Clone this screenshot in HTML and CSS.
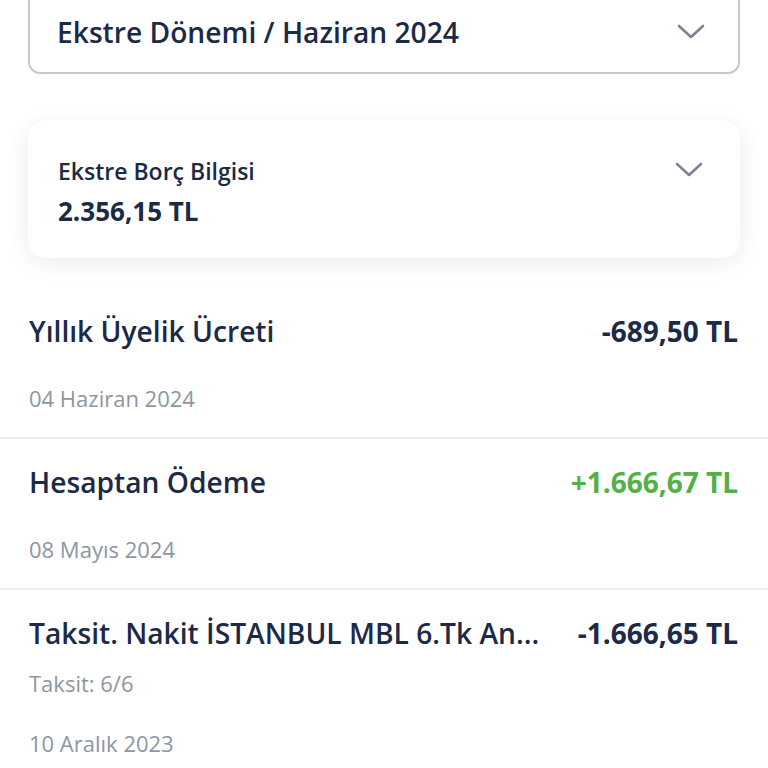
FILE: index.html
```html
<!DOCTYPE html>
<html lang="tr">
<head>
<meta charset="utf-8">
<title>Ekstre</title>
<link rel="stylesheet" href="styles.css">
</head>
<body>
<div class="page">
  <div class="period-select">
    <span class="period-text">Ekstre Dönemi / Haziran 2024</span>
    <svg class="chevron" width="28" height="16" viewBox="0 0 28 16"><path d="M2 2 L14 13 L26 2" fill="none" stroke="#7b8494" stroke-width="2.6" stroke-linecap="round" stroke-linejoin="round"/></svg>
  </div>

  <div class="debt-card">
    <div class="debt-info">
      <div class="debt-label">Ekstre Borç Bilgisi</div>
      <div class="debt-amount">2.356,15 TL</div>
    </div>
    <svg class="chevron card-chevron" width="28" height="16" viewBox="0 0 28 16"><path d="M2 2 L14 13 L26 2" fill="none" stroke="#7b8494" stroke-width="2.6" stroke-linecap="round" stroke-linejoin="round"/></svg>
  </div>

  <ul class="tx-list">
    <li class="tx">
      <div class="tx-head">
        <span class="tx-title">Yıllık Üyelik Ücreti</span>
        <span class="tx-amount">-689,50 TL</span>
      </div>
      <div class="tx-meta">04 Haziran 2024</div>
    </li>
    <li class="tx">
      <div class="tx-head">
        <span class="tx-title">Hesaptan Ödeme</span>
        <span class="tx-amount positive">+1.666,67 TL</span>
      </div>
      <div class="tx-meta">08 Mayıs 2024</div>
    </li>
    <li class="tx">
      <div class="tx-head">
        <span class="tx-title">Taksit. Nakit İSTANBUL MBL 6.Tk An...</span>
        <span class="tx-amount">-1.666,65 TL</span>
      </div>
      <div class="tx-meta installment">Taksit: 6/6</div>
      <div class="tx-meta after-installment">10 Aralık 2023</div>
    </li>
  </ul>
</div>
</body>
</html>
```

FILE: styles.css
```css
html, body {
  margin: 0;
  padding: 0;
  background: #ffffff;
}
body {
  font-family: "Open Sans", "Noto Sans", sans-serif;
  color: #1c2a47;
  width: 768px;
  height: 768px;
  overflow: hidden;
}
.page {
  display: flex;
  flex-direction: column;
}
.period-select {
  margin: 0 28px;
  height: 74px;
  box-sizing: border-box;
  border: 2px solid #c6c8cc;
  border-top: none;
  border-radius: 0 0 12px 12px;
  padding: 12px 33px 20px 27px;
  display: flex;
  align-items: flex-start;
  justify-content: space-between;
}
.period-text {
  font-size: 28.2px;
  line-height: 40px;
  font-weight: 600;
}
.chevron {
  display: block;
  flex: none;
}
.period-select .chevron {
  margin-top: 12px;
}
.debt-card {
  margin: 46px 28px 0;
  height: 138px;
  box-sizing: border-box;
  border-radius: 18px;
  background: #ffffff;
  box-shadow: 0 5px 24px rgba(0, 0, 0, 0.08);
  padding: 37px 37px 0 30px;
  display: flex;
  justify-content: space-between;
  align-items: flex-start;
}
.debt-label {
  font-size: 23px;
  line-height: 28px;
  font-weight: 600;
}
.debt-amount {
  margin-top: 9px;
  font-size: 26px;
  line-height: 34px;
  font-weight: 700;
}
.card-chevron {
  margin-top: 5px;
}
.tx-list {
  list-style: none;
  margin: 30px 0 0;
  padding: 0;
}
.tx {
  padding: 23px 30px 24px 29px;
  border-bottom: 2px solid #eeeff0;
}
.tx-head {
  display: flex;
  align-items: baseline;
  gap: 38px;
}
.tx-title {
  flex: 1;
  min-width: 0;
  font-size: 28.2px;
  line-height: 40px;
  font-weight: 600;
  white-space: nowrap;
  overflow: hidden;
  text-overflow: ellipsis;
}
.tx-amount {
  flex: none;
  font-size: 28px;
  line-height: 40px;
  font-weight: 700;
}
.tx-amount.positive {
  color: #52b044;
}
.tx-meta {
  margin-top: 32px;
  font-size: 22px;
  line-height: 30px;
  font-weight: 500;
  color: #8d96a3;
}
.tx-meta.installment {
  margin-top: 15px;
}
.tx-meta.after-installment {
  margin-top: 30px;
}
```
